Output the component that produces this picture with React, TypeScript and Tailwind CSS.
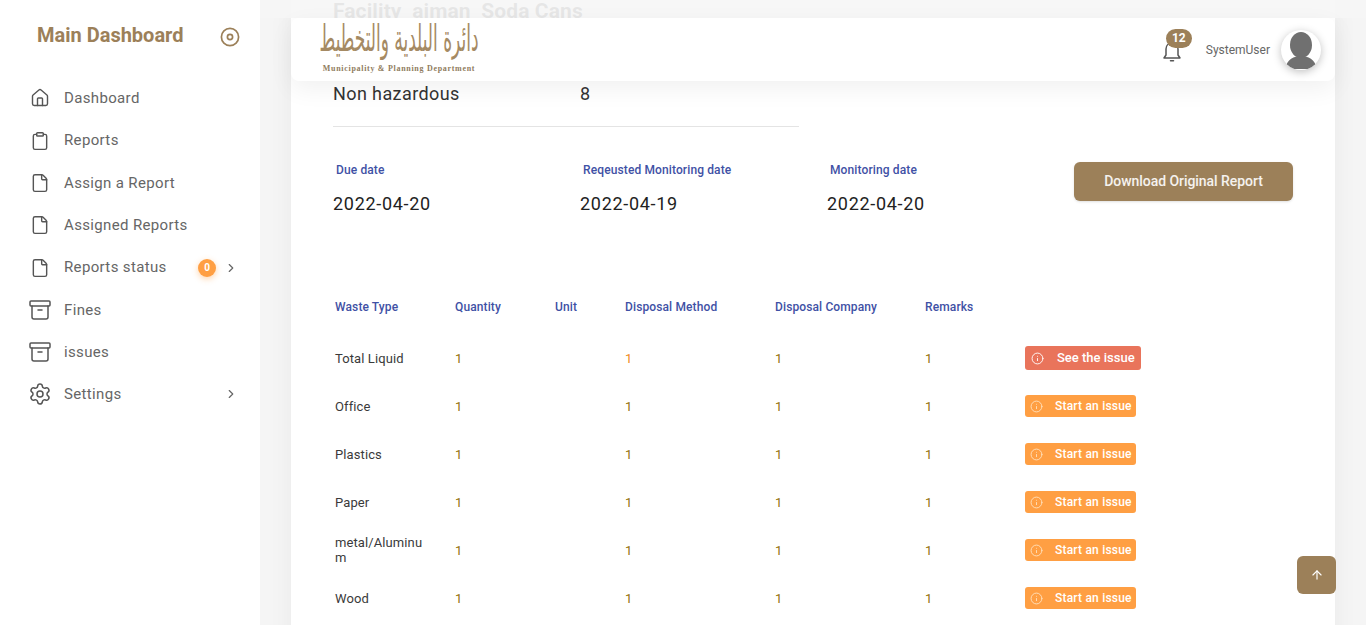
import { Archive, ArrowUp, ChevronRight, Clipboard, File, House, Info, Settings } from "lucide-react";

const navItems = [
  { label: "Dashboard", icon: House },
  { label: "Reports", icon: Clipboard },
  { label: "Assign a Report", icon: File },
  { label: "Assigned Reports", icon: File },
  { label: "Reports status", icon: File, badge: "0", arrow: true },
  { label: "Fines", icon: Archive },
  { label: "issues", icon: Archive },
  { label: "Settings", icon: Settings, arrow: true },
];

const dates = [
  { label: "Due date", value: "2022-04-20" },
  { label: "Reqeusted Monitoring date", value: "2022-04-19" },
  { label: "Monitoring date", value: "2022-04-20" },
];

const headers = ["Waste Type", "Quantity", "Unit", "Disposal Method", "Disposal Company", "Remarks"];
const rows = ["Total Liquid", "Office", "Plastics", "Paper", "metal/Aluminum", "Wood"];

const Sidebar = () => (
  <aside className="w-[260px] shrink-0 bg-white pt-[23px] relative z-30">
    <div className="flex items-center pl-[37px] h-[24px]">
      <span className="w-[183px] text-[20px] font-bold text-[#9c8059] leading-6 whitespace-nowrap">Main Dashboard</span>
      <svg className="mt-1" width="20" height="20" viewBox="0 0 20 20" fill="none" stroke="#9c8059" strokeWidth="1.7">
        <circle cx="10" cy="10" r="8.6" />
        <circle cx="10" cy="10" r="2.6" />
      </svg>
    </div>
    <nav className="mt-[30.2px]">
      {navItems.map((item) => {
        const Icon = item.icon;
        const big = item.icon === Archive || item.icon === Settings;
        return (
          <div key={item.label} className="h-[42.3px] flex items-center pl-[30px] text-[#666666]">
            <span className="w-[20px] flex justify-center">
              <Icon size={big ? 24 : 20} strokeWidth={big ? 1.5 : 1.7} color="#555555" className="shrink-0" />
            </span>
            <span className="ml-[14px] text-[15px] tracking-[0.35px]">{item.label}</span>
            {item.badge && (
              <span className="absolute left-[198px] w-[18px] h-[18px] rounded-full bg-[#ff9f43] text-white text-[10px] font-bold flex items-center justify-center shadow-[0_2px_6px_rgba(255,159,67,0.45)]">
                {item.badge}
              </span>
            )}
            {item.arrow && <ChevronRight className="absolute left-[224px]" size={14} color="#666666" />}
          </div>
        );
      })}
    </nav>
  </aside>
);

const Logo = () => (
  <div className="ml-[29px] w-[158px] pt-[15px] flex flex-col items-center">
    <span dir="rtl" className="text-[17px] leading-[24px] text-[#a58a63] whitespace-nowrap scale-y-[2.2] origin-bottom font-['DejaVu_Sans',sans-serif]">دائرة البلدية والتخطيط</span>
    <span className="text-[8px] leading-[10px] font-bold text-[#8f7c60] tracking-[0.7px] whitespace-nowrap font-['Liberation_Serif',serif]">Municipality &amp; Planning Department</span>
  </div>
);

const Header = () => (
  <header className="absolute left-[31px] top-[18px] w-[1044px] h-[63px] bg-white rounded-lg shadow-[0_8px_24px_rgba(0,0,0,0.06)] flex items-center z-20">
    <Logo />
    <div className="ml-auto flex items-center pr-[14px]">
      <div className="relative mt-[3px]">
        <svg width="20" height="23" viewBox="0 0 20 23" fill="none" stroke="#555555" strokeWidth="1.5" strokeLinecap="round">
          <path d="M4 15 V9 C4 5.5 6.5 3 10 3 C13.5 3 16 5.5 16 9 V15 L18 18 H2 Z" strokeLinejoin="round" />
          <path d="M8.5 20.8 H11.5" />
        </svg>
        <span className="absolute -top-[11px] left-[4px] w-[26px] h-[19px] rounded-full bg-[#9c8059] text-white text-[12px] font-bold flex items-center justify-center">12</span>
      </div>
      <span className="ml-[24px] text-[12px] text-[#666666]">SystemUser</span>
      <div className="ml-[11px] w-[40px] h-[40px] rounded-full bg-white shadow-[0_2px_8px_rgba(0,0,0,0.25)] overflow-hidden">
        <svg width="40" height="40" viewBox="0 0 40 40" fill="#707070">
          <ellipse cx="20" cy="15" rx="11" ry="13" />
          <path d="M4 39 C6 29 13 26 20 26 C27 26 34 29 36 39 Z" />
        </svg>
      </div>
    </div>
  </header>
);

const Row = ({ name, index }: { name: string; index: number }) => (
  <div className="h-[48px] grid grid-cols-[120px_100px_70px_150px_150px_100px_1fr] items-center text-[13px]">
    <span className="w-[88px] break-all leading-[15px] text-[#3a3a3a] tracking-[0.1px]">{name}</span>
    <span className="pt-[1px] text-[#94700c]">1</span>
    <span />
    <span className={index === 0 ? "pt-[1px] text-[#f08a24]" : "pt-[1px] text-[#94700c]"}>1</span>
    <span className="pt-[1px] text-[#94700c]">1</span>
    <span className="pt-[1px] text-[#94700c]">1</span>
    {index === 0 ? (
      <span className="w-[116px] h-[24px] rounded-[3px] bg-[#e9745b] text-white text-[13px] font-medium flex items-center pl-[6px]">
        <Info size={13} strokeWidth={1.7} color="#ffffff" />
        <span className="ml-[13px]">See the issue</span>
      </span>
    ) : (
      <span className="w-[111px] h-[22px] rounded-[3px] bg-[#ff9f43] text-white text-[12px] font-medium flex items-center pl-[5px]">
        <Info size={13} strokeWidth={1.7} color="#ffe0bd" />
        <span className="ml-[12px] tracking-[0.2px]">Start an issue</span>
      </span>
    )}
  </div>
);

export default function App() {
  return (
    <div className="relative w-[1366px] h-[625px] overflow-hidden flex bg-[#f5f5f5] font-['Roboto',sans-serif]">
      <Sidebar />
      <main className="relative flex-1 h-[625px] overflow-hidden">
        <Header />
        {/* strip over the scrolled content above the header */}
        <div className="absolute left-0 right-0 top-0 h-[18px] bg-[#f6f6f6]/90 z-10" />
        <div className="ml-[31px] w-[1044px] bg-white shadow-[0_4px_24px_rgba(0,0,0,0.05)] pl-[42px] h-[900px]">
          <h2 className="text-[21px] leading-[22px] font-bold text-[#555555] tracking-[0.1px]">Facility&nbsp; aiman&nbsp; Soda Cans</h2>
          <div className="mt-[61px] flex text-[18px] leading-[22px] text-[#333333] tracking-[0.4px]">
            <span className="w-[247px]">Non hazardous</span>
            <span>8</span>
          </div>
          <div className="mt-[21px] w-[466px] border-t border-[#e4e4e4]" />
          <div className="mt-[35px] flex items-start">
            {dates.map((d) => (
              <div key={d.label} className="w-[247px]">
                <div className="pl-[3px] text-[12px] leading-[16px] font-medium text-[#3f51a5] tracking-[0.12px]">{d.label}</div>
                <div className="mt-[15px] text-[18px] leading-[22px] text-[#222222] tracking-[0.7px]">{d.value}</div>
              </div>
            ))}
            <button className="w-[219px] h-[39px] rounded-md bg-[#9c8059] text-white/90 text-[14px] font-medium tracking-[-0.05px] shadow-sm">Download Original Report</button>
          </div>
          <div className="mt-[83px] ml-[2px]">
            <div className="h-[16px] grid grid-cols-[120px_100px_70px_150px_150px_100px_1fr] items-center text-[12px] font-medium text-[#3f51a5] tracking-[0.12px]">
              {headers.map((h) => (
                <span key={h}>{h}</span>
              ))}
            </div>
            <div className="mt-[20px]">
              {rows.map((name, i) => (
                <Row key={name} name={name} index={i} />
              ))}
            </div>
          </div>
        </div>
        <button className="absolute left-[1037px] top-[556px] w-[39px] h-[38px] rounded-md bg-[#9c8059] flex items-center justify-center z-20">
          <ArrowUp size={14} color="#ffffff" />
        </button>
      </main>
    </div>
  );
}
